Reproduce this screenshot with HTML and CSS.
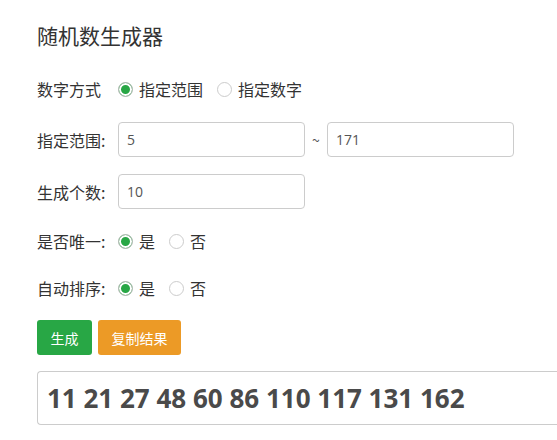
FILE: index.html
```html
<!DOCTYPE html>
<html lang="zh-CN">
<head>
    <meta charset="UTF-8">
    <meta name="viewport" content="width=device-width, initial-scale=1.0">
    <title>随机数生成器</title>
    <link rel="stylesheet" href="styles.css">
</head>
<body>
    <div class="container">
        <h1 class="title">随机数生成器</h1>

        <div class="row radio-row mode">
            <span class="label">数字方式</span>
            <label class="radio"><span class="dot checked"></span>指定范围</label>
            <label class="radio"><span class="dot"></span>指定数字</label>
        </div>

        <div class="row">
            <span class="label">指定范围:</span>
            <input type="text" class="field" value="5">
            <span class="tilde">~</span>
            <input type="text" class="field" value="171">
        </div>

        <div class="row">
            <span class="label">生成个数:</span>
            <input type="text" class="field" value="10">
        </div>

        <div class="row radio-row">
            <span class="label">是否唯一:</span>
            <label class="radio"><span class="dot checked"></span>是</label>
            <label class="radio"><span class="dot"></span>否</label>
        </div>

        <div class="row radio-row">
            <span class="label">自动排序:</span>
            <label class="radio"><span class="dot checked"></span>是</label>
            <label class="radio"><span class="dot"></span>否</label>
        </div>

        <div class="row buttons">
            <button class="btn btn-green">生成</button>
            <button class="btn btn-orange">复制结果</button>
        </div>

        <div class="result">11 21 27 48 60 86 110 117 131 162</div>
    </div>
</body>
</html>
```

FILE: styles.css
```css
body {
    margin: 0;
    font-family: "Noto Sans CJK SC", "Open Sans", sans-serif;
    color: #333;
    background: #fff;
}

.container {
    padding: 20px 0 0 37px;
}

.title {
    font-size: 21px;
    font-weight: normal;
    line-height: 30px;
    margin: 0 0 24px;
    color: #333;
}

.row {
    display: flex;
    align-items: center;
    height: 35px;
    margin-bottom: 17px;
    font-size: 16px;
}

.radio-row {
    height: 30px;
}

.mode {
    margin-bottom: 18px;
}

.label {
    width: 81px;
}

.radio {
    display: flex;
    align-items: center;
    margin-right: 14px;
}

.dot {
    width: 15px;
    height: 15px;
    border: 1px solid #ccc;
    border-radius: 50%;
    box-sizing: border-box;
    margin-right: 6px;
    background: #fff;
}

.dot.checked {
    background: #28a745;
    border: 1px solid #bbb;
    box-shadow: inset 0 0 0 2px #fff;
}

.field {
    width: 187px;
    height: 35px;
    box-sizing: border-box;
    border: 1px solid #ccc;
    border-radius: 4px;
    padding: 0 8px;
    font-family: "Open Sans", sans-serif;
    font-size: 14px;
    color: #555;
}

.tilde {
    width: 22px;
    text-align: center;
    font-size: 14px;
    color: #555;
}

.buttons {
    gap: 6px;
    margin-bottom: 16px;
}

.btn {
    height: 35px;
    border: none;
    border-radius: 3px;
    color: #fff;
    font-family: "Noto Sans CJK SC", sans-serif;
    font-size: 14px;
    padding: 0;
}

.btn-green {
    background-color: #28a745;
    width: 55px;
}

.btn-orange {
    background-color: #ec9a26;
    width: 83px;
}

.result {
    width: 520px;
    height: 54px;
    box-sizing: border-box;
    border: 1px solid #ccc;
    border-right: none;
    border-radius: 4px 0 0 4px;
    padding: 0 9px;
    display: flex;
    align-items: center;
    font-family: "Open Sans", sans-serif;
    font-weight: bold;
    font-size: 26px;
    color: #4a4a4a;
}
```
